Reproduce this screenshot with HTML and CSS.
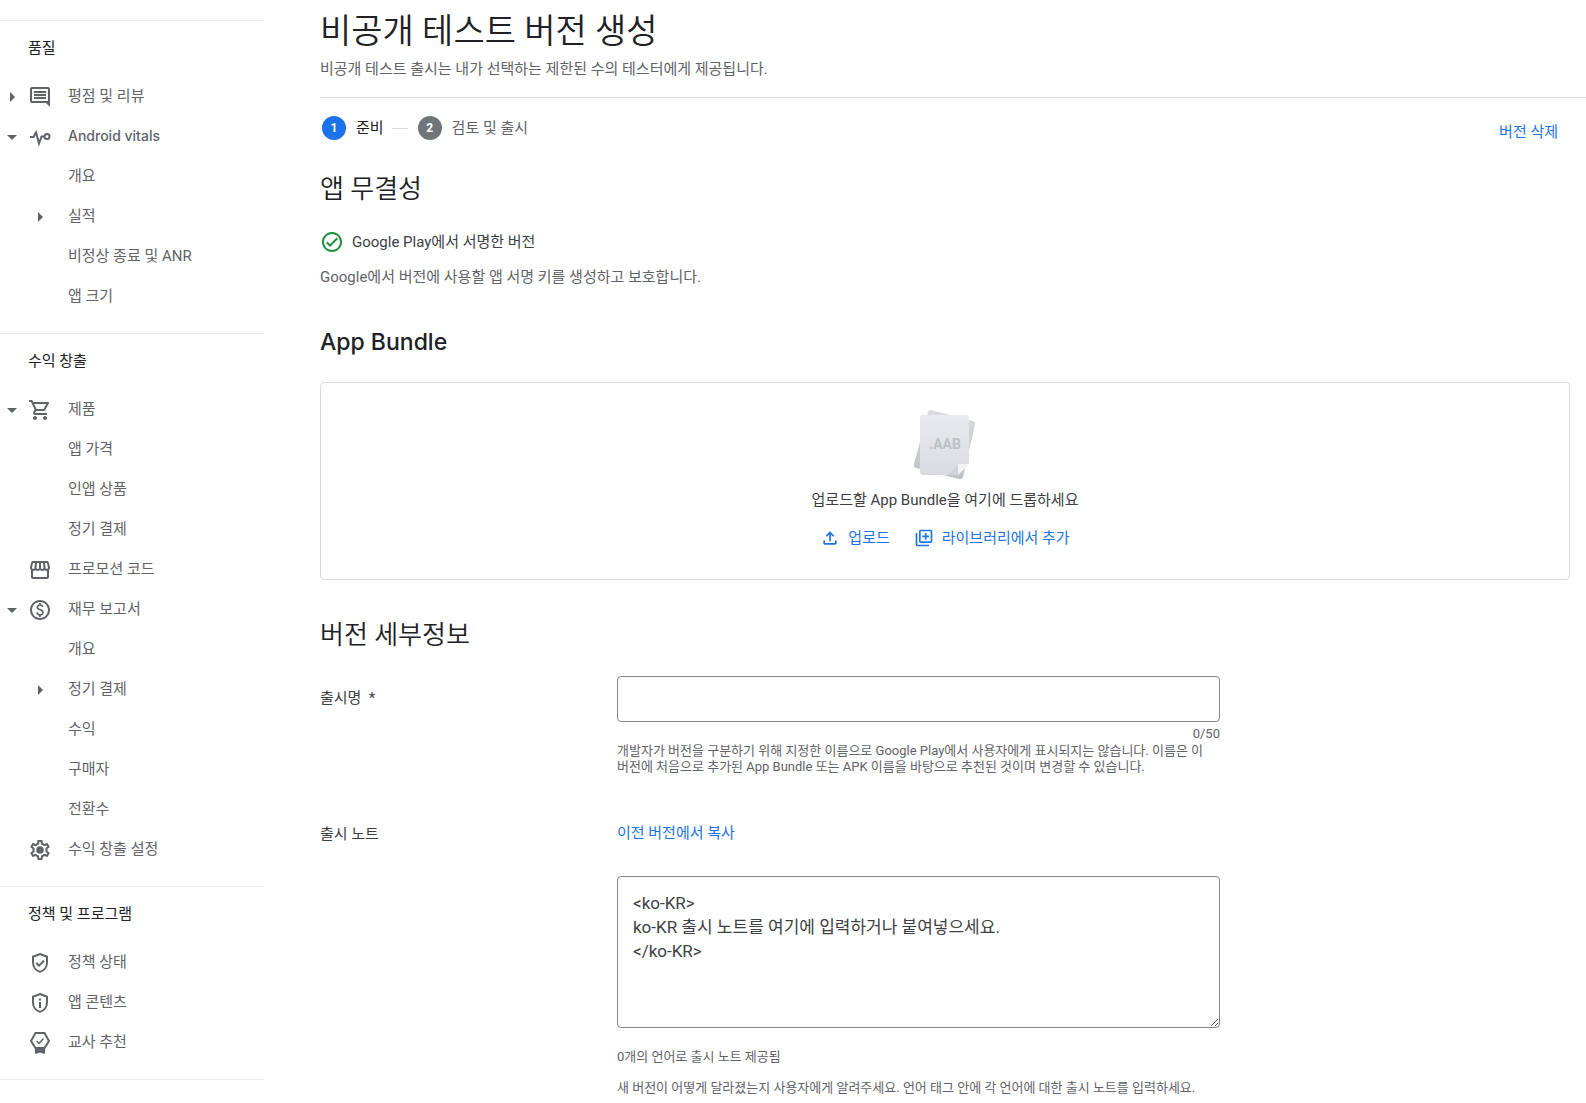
FILE: index.html
```
<!DOCTYPE html>
<html lang="ko">
  <head>
    <meta charset="utf-8">
    <title>비공개 테스트 버전 생성</title>
    <link rel="stylesheet" href="styles.css">
  </head>
  <body>
    <div class="page">
      <nav class="sidebar">
        <section class="nav-section">
          <h3>품질</h3>
          <a href="#" class="nav-item">
            <svg class="arrow" viewBox="0 0 24 24"><path d="M10 7v10l5-5z"/></svg>
            <svg class="icon" viewBox="0 0 24 24"><path d="M22 4c0-1.100-.9-2-2-2H4c-1.100 0-2 .9-2 2v12c0 1.100.9 2 2 2h14l4 4V4zM4 16V4h16v12H4zM6 12h12v2H6zm0-3h12v2H6zm0-3h12v2H6z"/></svg>
            <span>평점 및 리뷰</span>
          </a>
          <a href="#" class="nav-item latin">
            <svg class="arrow" viewBox="0 0 24 24"><path d="M7 10l5 5 5-5z"/></svg>
            <svg class="icon line" viewBox="0 0 24 24"><path d="M2 12h3.500l2.500-4.500 3 11 2.500-7H16"/><circle cx="19" cy="11.500" r="2.500"/></svg>
            <span>Android vitals</span>
          </a>
          <a href="#" class="nav-item sub"><span>개요</span></a>
          <a href="#" class="nav-item sub">
            <svg class="arrow" viewBox="0 0 24 24"><path d="M10 7v10l5-5z"/></svg>
            <span>실적</span>
          </a>
          <a href="#" class="nav-item sub"><span>비정상 종료 및 ANR</span></a>
          <a href="#" class="nav-item sub"><span>앱 크기</span></a>
        </section>

        <section class="nav-section">
          <h3>수익 창출</h3>
          <a href="#" class="nav-item">
            <svg class="arrow" viewBox="0 0 24 24"><path d="M7 10l5 5 5-5z"/></svg>
            <svg class="icon" viewBox="0 0 24 24"><path d="M15.550 13c.75 0 1.410-.41 1.750-1.030l3.580-6.490A.996.996 0 0 0 20.010 4H5.210l-.94-2H1v2h2l3.600 7.590-1.350 2.440C4.520 15.370 5.480 17 7 17h12v-2H7l1.100-2h7.450zM6.160 6h12.150l-2.760 5H8.530L6.160 6zM7 18c-1.100 0-1.990.9-1.990 2S5.900 22 7 22s2-.9 2-2-.9-2-2-2zm10 0c-1.100 0-1.990.9-1.990 2s.89 2 1.990 2 2-.9 2-2-.9-2-2-2z"/></svg>
            <span>제품</span>
          </a>
          <a href="#" class="nav-item sub"><span>앱 가격</span></a>
          <a href="#" class="nav-item sub"><span>인앱 상품</span></a>
          <a href="#" class="nav-item sub"><span>정기 결제</span></a>
          <a href="#" class="nav-item">
            <svg class="icon" viewBox="0 0 24 24"><path d="M21.900 8.890l-1.050-4.370c-.22-.9-1-1.520-1.910-1.520H5.050c-.9 0-1.690.63-1.900 1.520L2.100 8.890c-.24 1.020-.02 2.060.62 2.880.08.110.19.190.28.290V19c0 1.100.9 2 2 2h14c1.100 0 2-.9 2-2v-6.940c.09-.09.2-.18.280-.28.64-.82.870-1.870.620-2.890zM18.910 4.990l1.050 4.370c.1.420.01.840-.25 1.170-.14.180-.44.470-.94.470-.61 0-1.140-.49-1.210-1.140L16.980 5l1.930-.01zM13 5h1.960l.54 4.520c.05.390-.07.780-.33 1.070-.22.260-.54.410-.95.410-.67 0-1.220-.59-1.220-1.310V5zM8.490 9.520L9.040 5H11v4.690c0 .72-.55 1.310-1.290 1.310-.34 0-.65-.15-.89-.41-.25-.29-.37-.68-.33-1.070zM4.040 9.370L5.050 5h1.970l-.58 4.860c-.08.65-.6 1.140-1.210 1.140-.49 0-.8-.29-.93-.47-.27-.32-.36-.75-.26-1.160zM5 19v-6.030c.08.010.150.030.230.030.87 0 1.660-.36 2.240-.95.6.6 1.400.95 2.310.95.87 0 1.650-.36 2.230-.93.590.57 1.390.93 2.290.93.840 0 1.640-.35 2.240-.95.580.59 1.370.95 2.240.95.080 0 .15-.02.230-.03V19H5z"/></svg>
            <span>프로모션 코드</span>
          </a>
          <a href="#" class="nav-item">
            <svg class="arrow" viewBox="0 0 24 24"><path d="M7 10l5 5 5-5z"/></svg>
            <svg class="icon" viewBox="0 0 24 24"><path d="M12 2C6.480 2 2 6.480 2 12s4.480 10 10 10 10-4.480 10-10S17.520 2 12 2zm0 18c-4.410 0-8-3.590-8-8s3.590-8 8-8 8 3.590 8 8-3.590 8-8 8zm.89-8.900c-1.780-.59-2.640-.96-2.640-1.900 0-1.020 1.110-1.390 1.810-1.390 1.310 0 1.790.99 1.900 1.340l1.580-.67c-.15-.44-.82-1.910-2.660-2.230V5h-1.750v1.260c-2.600.56-2.620 2.850-2.620 2.960 0 2.270 2.250 2.910 3.350 3.310 1.580.56 2.280 1.070 2.280 2.030 0 1.130-1.050 1.610-1.980 1.610-1.820 0-2.340-1.870-2.400-2.090l-1.660.67c.63 2.190 2.280 2.780 2.900 2.960V19h1.750v-1.240c.52-.09 3.020-.59 3.020-3.220.01-1.390-.6-2.610-2.880-3.440z"/></svg>
            <span>재무 보고서</span>
          </a>
          <a href="#" class="nav-item sub"><span>개요</span></a>
          <a href="#" class="nav-item sub">
            <svg class="arrow" viewBox="0 0 24 24"><path d="M10 7v10l5-5z"/></svg>
            <span>정기 결제</span>
          </a>
          <a href="#" class="nav-item sub"><span>수익</span></a>
          <a href="#" class="nav-item sub"><span>구매자</span></a>
          <a href="#" class="nav-item sub"><span>전환수</span></a>
          <a href="#" class="nav-item">
            <svg class="icon" viewBox="0 0 24 24"><path d="M19.430 12.980c.04-.32.070-.64.070-.98s-.03-.66-.07-.98l2.110-1.650c.19-.15.240-.42.120-.64l-2-3.460a.5.5 0 0 0-.61-.22l-2.490 1a7.300 7.300 0 0 0-1.690-.98l-.38-2.650A.488.488 0 0 0 14 2h-4c-.25 0-.46.180-.49.420l-.38 2.650c-.61.250-1.170.59-1.690.98l-2.490-1a.5.5 0 0 0-.61.220l-2 3.460c-.13.220-.07.490.120.640l2.110 1.650c-.04.320-.07.650-.07.980s.03.660.070.980l-2.110 1.650c-.19.150-.24.420-.12.640l2 3.460c.12.220.39.300.61.220l2.490-1c.52.400 1.080.73 1.690.98l.38 2.650c.03.240.24.420.490.420h4c.25 0 .46-.18.490-.42l.38-2.650c.61-.25 1.170-.59 1.690-.98l2.490 1c.23.090.49 0 .61-.22l2-3.460c.12-.22.070-.49-.12-.64l-2.110-1.650zm-1.980-1.710c.04.310.050.520.050.730s-.02.430-.05.730l-.14 1.130.89.7 1.080.84-.7 1.210-1.270-.51-1.040-.42-.9.680c-.43.320-.84.560-1.250.73l-1.060.43-.16 1.130-.2 1.350h-1.400l-.19-1.350-.16-1.130-1.060-.43c-.43-.18-.83-.41-1.230-.71l-.91-.7-1.060.43-1.270.51-.7-1.210 1.080-.84.890-.7-.14-1.130c-.03-.31-.05-.54-.05-.74s.02-.43.050-.73l.14-1.130-.89-.7-1.080-.84.7-1.210 1.270.51 1.040.42.9-.68c.43-.32.840-.56 1.250-.73l1.060-.43.16-1.130.2-1.350h1.390l.19 1.350.16 1.130 1.060.43c.43.180.83.410 1.230.71l.91.7 1.060-.43 1.270-.51.7 1.210-1.070.85-.89.7.14 1.130z"/><circle cx="12" cy="12" r="3.800"/></svg>
            <span>수익 창출 설정</span>
          </a>
        </section>

        <section class="nav-section">
          <h3>정책 및 프로그램</h3>
          <a href="#" class="nav-item">
            <svg class="icon line" viewBox="0 0 24 24"><path d="M12 3l7 2.800v5.700c0 4.300-2.900 8.200-7 9.400-4.100-1.200-7-5.100-7-9.400V5.800z"/><path d="M8.300 12l2.700 2.700 5-5"/></svg>
            <span>정책 상태</span>
          </a>
          <a href="#" class="nav-item">
            <svg class="icon line" viewBox="0 0 24 24"><path d="M12 3l7 2.800v5.700c0 4.300-2.900 8.200-7 9.400-4.100-1.200-7-5.100-7-9.400V5.800z"/><path d="M12 11v6M12 7.500v2"/></svg>
            <span>앱 콘텐츠</span>
          </a>
          <a href="#" class="nav-item">
            <svg class="icon line" viewBox="0 0 24 24"><path d="M7.500 2h9l4.500 8-4.500 7h-9L3 10z"/><path d="M8.500 10l2.500 2.500 4.500-5" stroke-width="1.500"/><path class="solid" d="M7 17h10v6l-5-1.500L7 23z"/></svg>
            <span>교사 추천</span>
          </a>
        </section>
        <hr>
      </nav>

      <main>
        <header>
          <h1>비공개 테스트 버전 생성</h1>
          <p>비공개 테스트 출시는 내가 선택하는 제한된 수의 테스터에게 제공됩니다.</p>
        </header>

        <div class="content">
          <div class="stepper">
            <span class="step-number active">1</span>
            <span class="step-label active">준비</span>
            <span class="step-line"></span>
            <span class="step-number">2</span>
            <span class="step-label">검토 및 출시</span>
            <button type="button" class="delete">버전 삭제</button>
          </div>

          <h2 class="first">앱 무결성</h2>
          <div class="signed">
            <svg viewBox="0 0 24 24"><path d="M12 2C6.480 2 2 6.480 2 12s4.480 10 10 10 10-4.480 10-10S17.520 2 12 2zm0 18c-4.410 0-8-3.590-8-8s3.590-8 8-8 8 3.590 8 8-3.590 8-8 8zm4.590-12.420L10 14.170l-2.590-2.580L6 13l4 4 8-8z"/></svg>
            <span>Google Play에서 서명한 버전</span>
          </div>
          <p class="description">Google에서 버전에 사용할 앱 서명 키를 생성하고 보호합니다.</p>

          <h2 class="latin">App Bundle</h2>
          <div class="dropzone">
            <svg class="files" viewBox="0 0 62 70">
              <defs>
                <linearGradient id="back" x1="0" y1="0" x2="0" y2="1">
                  <stop offset="0" stop-color="#dadce0"/>
                  <stop offset="1" stop-color="#bdc1c6"/>
                </linearGradient>
                <linearGradient id="front" x1="0" y1="0" x2="0" y2="1">
                  <stop offset="0" stop-color="#e8eaed"/>
                  <stop offset="1" stop-color="#dadce0"/>
                </linearGradient>
              </defs>
              <path fill="url(#back)" d="M17 0l42 11q3 1 2 4L49 67q-1 3-4 2L2 58q-3-1-2-4L14 2q1-2 3-2z"/>
              <path fill="url(#front)" d="M9 5h43q3 0 3 3v46L44 65H9q-3 0-3-3V8q0-3 3-3z"/>
              <path fill="#d0d3d7" d="M44 54v11H34z"/>
              <path fill="#f1f3f4" d="M44 54h11L44 65z"/>
              <text x="31" y="39" text-anchor="middle">.AAB</text>
            </svg>
            <p>업로드할 App Bundle을 여기에 드롭하세요</p>
            <div class="actions">
              <button type="button">
                <svg viewBox="0 0 24 24"><path d="M18 15v3H6v-3H4v3c0 1.100.9 2 2 2h12c1.100 0 2-.9 2-2v-3h-2zM7 9l1.410 1.410L11 7.830V16h2V7.830l2.590 2.580L17 9l-5-5-5 5z"/></svg>
                업로드
              </button>
              <button type="button">
                <svg viewBox="0 0 24 24"><path d="M4 6H2v14c0 1.100.9 2 2 2h14v-2H4V6zm16-4H8c-1.100 0-2 .9-2 2v12c0 1.100.9 2 2 2h12c1.100 0 2-.9 2-2V4c0-1.100-.9-2-2-2zm0 14H8V4h12v12zm-7-2h2v-3h3V9h-3V6h-2v3h-3v2h3v3z"/></svg>
                라이브러리에서 추가
              </button>
            </div>
          </div>

          <h2>버전 세부정보</h2>
          <form>
            <div class="form-row">
              <label for="release-name">출시명&nbsp; *</label>
              <div class="field">
                <input type="text" id="release-name" maxlength="50">
                <div class="counter">0/50</div>
                <p>개발자가 버전을 구분하기 위해 지정한 이름으로 Google Play에서 사용자에게 표시되지는 않습니다. 이름은 이 버전에 처음으로 추가된 App Bundle 또는 APK 이름을 바탕으로 추천된 것이며 변경할 수 있습니다.</p>
              </div>
            </div>
            <div class="form-row notes">
              <label for="release-notes">출시 노트</label>
              <div class="field">
                <button type="button">이전 버전에서 복사</button>
                <textarea id="release-notes">&lt;ko-KR&gt;
ko-KR 출시 노트를 여기에 입력하거나 붙여넣으세요.
&lt;/ko-KR&gt;</textarea>
                <p>0개의 언어로 출시 노트 제공됨</p>
                <p>새 버전이 어떻게 달라졌는지 사용자에게 알려주세요. 언어 태그 안에 각 언어에 대한 출시 노트를 입력하세요.</p>
              </div>
            </div>
          </form>
        </div>
      </main>
    </div>
  </body>
</html>
```
FILE: styles.css
```
* {
  box-sizing: border-box;
}
body {
  margin: 0;
  background: white;
  color: #5f6368;
  font-family: Roboto, "Noto Sans CJK KR", sans-serif;
  font-size: 15px;
  line-height: 20px;
  word-break: keep-all;
}
h1, h2, h3, p {
  margin: 0;
  font-weight: 400;
}
h1, h2, h3 {
  color: #202124;
}
svg {
  fill: currentColor;
  flex: none;
}
button {
  border: none;
  padding: 0;
  background: none;
  color: #1a73e8;
  font: inherit;
  cursor: pointer;
}
.page {
  display: flex;
}

/* sidebar */
.sidebar {
  flex: none;
  width: 264px;
  padding-top: 20px;
}
.sidebar hr {
  margin: 0;
  border: none;
  border-top: 1px solid #e8eaed;
}
.nav-section {
  border-top: 1px solid #e8eaed;
  padding-bottom: 16px;
}
.nav-section h3 {
  padding: 17px 28px 19px;
  font-size: 15px;
  line-height: 20px;
}
.nav-item {
  display: grid;
  grid-template-columns: 24px 24px 1fr;
  column-gap: 4px;
  align-items: center;
  height: 40px;
  color: #5f6368;
  text-decoration: none;
}
.nav-item span {
  grid-column: 3;
  grid-row: 1;
  padding: 0 0 2px 12px;
}
.nav-item svg {
  grid-row: 1;
  width: 24px;
  height: 24px;
}
.nav-item .arrow {
  grid-column: 1;
}
.nav-item .icon,
.nav-item.sub .arrow {
  grid-column: 2;
}
.nav-item.latin {
  font-family: Inter, sans-serif;
  font-size: 14px;
  font-weight: 500;
}
.line {
  fill: none;
  stroke: currentColor;
  stroke-width: 2;
}
.solid {
  fill: currentColor;
  stroke: none;
}

/* main */
main {
  flex: 1;
  min-width: 0;
  padding-left: 56px;
}
header {
  border-bottom: 1px solid #dadce0;
  padding: 9px 0 18px;
}
h1 {
  font-size: 34px;
  font-weight: 350;
  line-height: 44px;
  margin-bottom: 6px;
}
.content {
  padding-right: 16px;
}
.stepper {
  display: flex;
  align-items: center;
  height: 28px;
  margin-top: 16px;
  padding: 0 12px 0 2px;
}
.step-number {
  width: 24px;
  height: 24px;
  border-radius: 50%;
  background: #70757a;
  color: white;
  font-size: 12px;
  font-weight: 700;
  line-height: 24px;
  text-align: center;
}
.step-number.active {
  background: #1a73e8;
}
.step-label {
  margin-left: 10px;
}
.step-label.active {
  color: #202124;
}
.step-line {
  width: 16px;
  height: 1px;
  margin: 0 10px 0 8px;
  background: #dadce0;
}
.delete {
  align-self: flex-end;
  margin-left: auto;
}
h2 {
  margin: 39px 0 25px;
  font-size: 26px;
  font-weight: 350;
  line-height: 32px;
}
h2.first {
  margin-top: 31px;
}
h2.latin {
  margin-bottom: 24px;
  font-family: Inter, sans-serif;
  font-size: 23px;
  font-weight: 500;
}
.signed {
  display: flex;
  align-items: center;
  gap: 8px;
  color: #3c4043;
}
.signed svg {
  width: 24px;
  height: 24px;
  color: #1e8e3e;
}
.description {
  margin-top: 13px;
}
.dropzone {
  display: flex;
  flex-direction: column;
  align-items: center;
  border: 1px solid #dadce0;
  border-radius: 4px;
  padding: 27px 0 31px;
}
.files {
  width: 62px;
  height: 70px;
  margin-bottom: 10px;
}
.files text {
  fill: #bdc1c6;
  font-size: 14px;
  font-weight: 700;
}
.dropzone p {
  color: #3c4043;
}
.actions {
  display: flex;
  gap: 24px;
  margin-top: 18px;
}
.actions button {
  display: flex;
  align-items: center;
  gap: 8px;
}
.actions svg {
  width: 20px;
  height: 20px;
}

/* form */
.form-row {
  display: grid;
  grid-template-columns: 297px minmax(0, 603px);
}
.form-row label {
  padding-top: 12px;
  color: #3c4043;
}
.form-row.notes {
  margin-top: 48px;
}
.notes label {
  padding-top: 1px;
}
.field input,
.field textarea {
  display: block;
  width: 100%;
  border: 1px solid #80868b;
  border-radius: 4px;
  padding: 0 15px;
  background: white;
  color: #3c4043;
  font: inherit;
  font-size: 17px;
  line-height: 24px;
}
.field input {
  height: 46px;
}
.field textarea {
  height: 152px;
  margin: 33px 0 21px;
  padding: 14px 15px;
}
.field button {
  display: block;
}
.field p,
.counter {
  font-size: 13px;
  line-height: 16px;
}
.field p {
  margin-bottom: 15px;
}
.form-row:first-child p {
  margin: 0;
}
.counter {
  margin: 4px 0 1px;
  text-align: right;
}
```
